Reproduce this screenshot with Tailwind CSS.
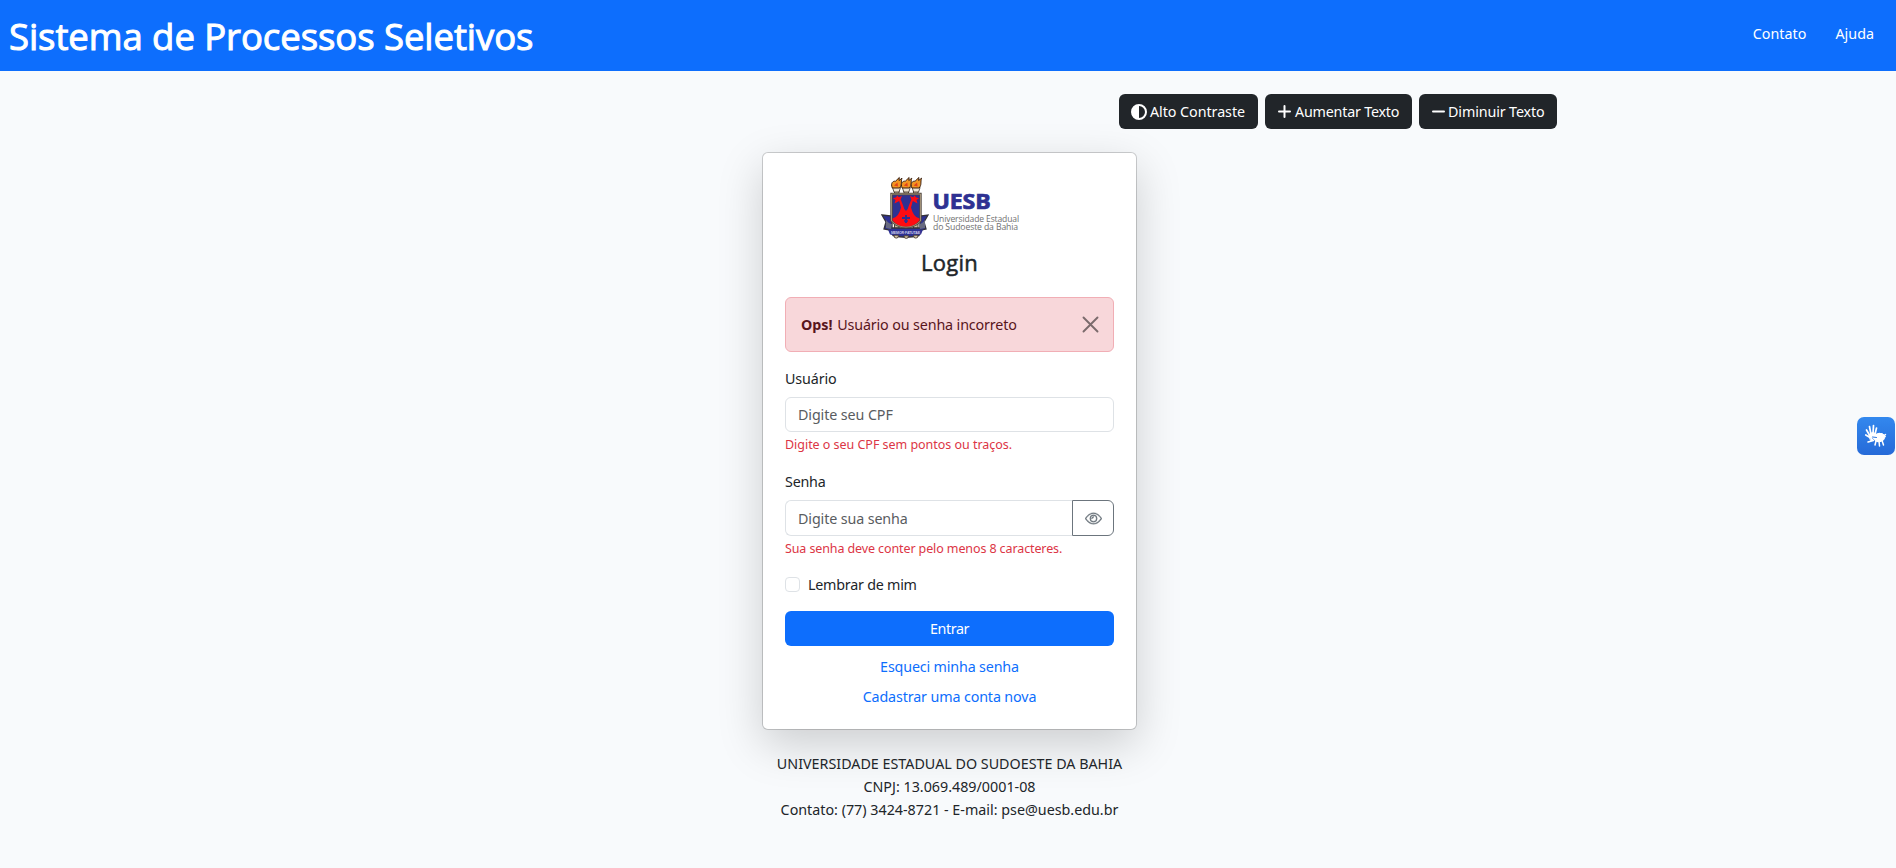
<!DOCTYPE html>
<html lang="pt-BR">
<head>
<meta charset="utf-8">
<title>Sistema de Processos Seletivos</title>
<script src="https://cdn.jsdelivr.net/npm/@tailwindcss/browser@4"></script>
</head>
<body class="h-[868px] overflow-hidden bg-[#f8fafc] font-['Noto_Sans',sans-serif] text-[14.3px] leading-[23px] tracking-[-0.13px] text-[#212529]">
<nav class="flex h-[71px] items-center justify-between bg-[#0d6efd] pl-[9px] pr-[22px] text-white">
  <h1 class="font-['Open_Sans',sans-serif] text-[36.5px] leading-[44px] tracking-[-0.07px] [-webkit-text-stroke:1px_white] whitespace-nowrap">Sistema de Processos Seletivos</h1>
  <div class="flex gap-[29px] pb-[4px] tracking-[0.02px]"><a>Contato</a><a>Ajuda</a></div>
</nav>

<div class="mt-[23px] ml-[1119px] flex h-[35px] gap-[7px] whitespace-nowrap text-white">
  <button class="flex w-[139px] items-center rounded-md bg-[#212529] pl-[12px] tracking-[-0.05px]">
    <svg class="mr-[3px] size-[16px]" viewBox="0 0 16 16"><circle cx="8" cy="8" r="7" fill="none" stroke="white" stroke-width="2"/><path d="M8 1a7 7 0 0 0 0 14z" fill="white"/></svg>Alto Contraste</button>
  <button class="flex w-[147px] items-center rounded-md bg-[#212529] pl-[13px] tracking-[-0.21px]">
    <svg class="mr-[4px] size-[13px]" viewBox="0 0 13 13" fill="none" stroke="white" stroke-width="2" stroke-linecap="round"><path d="M6.5 1v11M1 6.5h11"/></svg>Aumentar Texto</button>
  <button class="flex w-[138px] items-center rounded-md bg-[#212529] pl-[13px] tracking-[-0.12px]">
    <svg class="mr-[3px] size-[13px]" viewBox="0 0 13 13" fill="none" stroke="white" stroke-width="2" stroke-linecap="round"><path d="M1 6.5h11"/></svg>Diminuir Texto</button>
</div>

<main class="ml-[762px] mt-[23px] flex w-[375px] flex-col">
  <section class="flex h-[578px] flex-col rounded-md border border-black/[0.175] bg-white bg-clip-padding px-[22px] pt-[22px] shadow-[0_15px_45px_rgba(0,0,0,0.175)]">
    <svg class="mx-auto h-[64px] w-[140px] shrink-0" viewBox="0 0 140 64">
      <g stroke="#4b4036" stroke-width="1" fill="#c9b79b">
        <rect x="14.5" y="13" width="4.5" height="47" rx="2"/><rect x="24" y="13" width="4.5" height="49" rx="2"/><rect x="33.5" y="13" width="4.5" height="47" rx="2"/>
      </g>
      <g fill="#efe4d2" stroke="#3c3027" stroke-width=".8"><path d="M12.500 12.500h8l-1.500 4.500h-5zM22.300 12.500h8l-1.500 4.500h-5zM32.100 12.500h8l-1.500 4.500h-5z"/></g>
      <g fill="#f39422" stroke="#3a2112" stroke-width="1">
        <path d="M12.300 13C10.300 8 13 5.800 15.500 6.200L19.300 2.500l-.3 3 3-2.300c-1.500 4 .5 6-2.400 9.800z"/>
        <path d="M22.100 13C20.100 8 22.800 5.800 25.300 6.200L29.100 2.500l-.3 3 3-2.300c-1.500 4 .5 6-2.400 9.800z"/>
        <path d="M31.900 13C29.900 8 32.600 5.800 35.100 6.200L38.900 2.500l-.3 3 3-2.300c-1.500 4 .5 6-2.400 9.800z"/>
      </g>
      <path d="M14 10.500l3.500-3 .5 4zM23.800 10.500l3.500-3 .5 4zM33.600 10.500l3.500-3 .5 4z" fill="#e1431b"/>
      <path d="M2 40l10 1v12h28V41l8-1-4 7 2 7-5 1-2 5.500Q26 64 13 60.500L10 55l-6-1 2-7z" fill="#2e3192" stroke="#35333a" stroke-width="1.3"/>
      <path d="M6 45q3 4 6 4l-1 5-5-1zM45 45q-3 4-6 4l1 5 5-1z" fill="#686a80"/>
      <path d="M11.500 19h29v27q-6 6-14.500 6-8.500 0-14.500-6z" fill="#2e3192" stroke="#51473f" stroke-width="2.400"/>
      <path d="M11.500 19h29v27q-6 6-14.500 6-8.500 0-14.500-6z" fill="none" stroke="#a9987e" stroke-width=".9"/>
      <path d="M12.500 43.500q6-1 8.500-11l-1.800-6.500-4.700 2.500 1-3.500-2.500-1.800 3.200-.9 1-1.800 1.700 1.700 3.100-1.200-1.400 3.300 2.600 6.500q.8 4 2.800 5.200 2-1.200 2.800-5.200l2.600-6.500-1.400-3.300 3.100 1.200 1.700-1.700 1 1.800 3.200.9-2.500 1.800 1 3.500-4.700-2.500-1.800 6.500q2.500 10 8.500 11v2q-5 6-13.500 6t-13.500-6z" fill="#ff0c12"/>
      <path d="M26 40v8M22 43h8M24.300 46h3.400" stroke="#2e3192" stroke-width="1.900" fill="none"/>
      <path d="M8 54.500q17.500 3.500 35 0l-2 5q-16 3-31 0z" fill="#2e3192"/>
      <text x="11" y="59" font-family="Liberation Sans" font-size="3.800" font-weight="700" fill="#c9cae8" textLength="29" lengthAdjust="spacingAndGlyphs">MEMOR·FATUTAE</text>
      <g fill="#d5c5a9" stroke="#4b4036" stroke-width=".9"><path d="M14 60.200h4.500l-.5 2.300q-1.700 1.200-3.500 0zM24 60.800h4.500l-.5 2q-1.700 1.200-3.500 0zM33.500 60.200H38l-.5 2.300q-1.700 1.200-3.500 0z"/></g>
      <text x="52.500" y="34" font-family="Open Sans" font-size="20.500" font-weight="700" fill="#2e3192" stroke="#2e3192" stroke-width=".7" textLength="58" lengthAdjust="spacingAndGlyphs">UESB</text>
      <text x="53" y="46.800" font-family="Open Sans" font-size="8.300" fill="#707070" textLength="86" lengthAdjust="spacingAndGlyphs">Universidade Estadual</text>
      <text x="53" y="54.800" font-family="Open Sans" font-size="8.300" fill="#707070" textLength="85" lengthAdjust="spacingAndGlyphs">do Sudoeste da Bahia</text>
    </svg>
    <h2 class="mt-[8px] h-[30px] shrink-0 text-center font-['Open_Sans',sans-serif] text-[22px] leading-[30px] tracking-[0.3px] [-webkit-text-stroke:0.5px_#212529]">Login</h2>
    <div class="mt-[20px] flex h-[55px] shrink-0 items-center justify-between rounded-md border border-[#f1aeb5] bg-[#f8d7da] pl-[15px] pr-[14px] text-[#58151c]">
      <p class="whitespace-nowrap"><b class="mr-[1px] tracking-[0px]">Ops!</b> Usuário ou senha incorreto</p>
      <svg class="size-[17px] opacity-50" viewBox="0 0 17 17" fill="none" stroke="black" stroke-width="1.900" stroke-linecap="round"><path d="M1.500 1.500l14 14M15.500 1.500l-14 14"/></svg>
    </div>
    <label class="mt-[16px] h-[22px] shrink-0 leading-[22px]">Usuário</label>
    <input class="mt-[7px] h-[35px] shrink-0 rounded-md border border-[#dee2e6] bg-white px-[12px] tracking-[-0.1px] placeholder:text-[#595c5f]" placeholder="Digite seu CPF">
    <p class="mt-[4px] h-[18px] shrink-0 text-[12.500px] leading-[18px] tracking-[-0.032px] text-[#dc3545] whitespace-nowrap">Digite o seu CPF sem pontos ou traços.</p>
    <label class="mt-[17px] h-[22px] shrink-0 leading-[22px] tracking-[-0.22px]">Senha</label>
    <div class="mt-[7px] flex h-[36px] shrink-0">
      <input class="w-[287px] rounded-l-md border border-r-0 border-[#dee2e6] bg-white px-[12px] tracking-[-0.12px] placeholder:text-[#595c5f]" placeholder="Digite sua senha">
      <button class="flex w-[42px] items-center justify-center rounded-r-md border border-[#6c757d]">
        <svg class="size-[17px]" viewBox="0 0 16 16" fill="#6c757d" stroke="#6c757d" stroke-width=".3"><path d="M16 8s-3-5.500-8-5.500S0 8 0 8s3 5.500 8 5.500S16 8 16 8M1.173 8a13 13 0 0 1 1.660-2.043C4.120 4.668 5.880 3.500 8 3.500s3.879 1.168 5.168 2.457A13 13 0 0 1 14.828 8q-.086.130-.195.288c-.335.480-.830 1.120-1.465 1.755C11.879 11.332 10.119 12.500 8 12.500s-3.879-1.168-5.168-2.457A13 13 0 0 1 1.172 8z"/><path d="M8 5.500a2.500 2.500 0 1 0 0 5 2.500 2.500 0 0 0 0-5M4.500 8a3.500 3.500 0 1 1 7 0 3.500 3.500 0 0 1-7 0"/><path d="M8 5.500v1.300a1.200 1.200 0 0 1-1.200 1.200H5.500"/></svg>
      </button>
    </div>
    <p class="mt-[4px] h-[18px] shrink-0 text-[12.500px] leading-[18px] tracking-[-0.109px] text-[#dc3545] whitespace-nowrap">Sua senha deve conter pelo menos 8 caracteres.</p>
    <label class="mt-[15px] flex h-[23px] shrink-0 items-center gap-[8px] tracking-[-0.23px]"><span class="size-[15px] rounded-[4px] border border-[#dee2e6] bg-white"></span>Lembrar de mim</label>
    <button class="mt-[15px] h-[35px] shrink-0 rounded-md bg-[#0d6efd] tracking-[-0.4px] text-white">Entrar</button>
    <a class="mt-[9px] h-[23px] shrink-0 text-center tracking-[-0.16px] text-[#0d6efd]">Esqueci minha senha</a>
    <a class="mt-[7px] h-[23px] shrink-0 text-center text-[#0d6efd]">Cadastrar uma conta nova</a>
  </section>
  <footer class="mt-[22px] text-center tracking-[0px] whitespace-nowrap">
    <p>UNIVERSIDADE ESTADUAL DO SUDOESTE DA BAHIA</p>
    <p>CNPJ: 13.069.489/0001-08</p>
    <p>Contato: (77) 3424-8721 - E-mail: pse@uesb.edu.br</p>
  </footer>
</main>

<div class="fixed top-[417px] right-[1px] size-[38px] rounded-[7px] bg-linear-to-b from-[#3388ee] to-[#266ad8]">
  <svg class="size-[38px]" viewBox="0 0 38 38" fill="none" stroke="white" stroke-linecap="round" stroke-linejoin="round">
    <path d="M13 19L9.500 13M14 17.500L12.500 9.500M16 17L16.500 8.500M18 17.500L19.500 11M13 20.500L8.800 18" stroke-width="1.700"/>
    <path d="M12 18.500l3-3 4 1-1 3-4 1.500 2 2-2 .5z" fill="white" stroke-width="1"/>
    <path d="M17 19q3-3.500 8-2.500l3.500 2.500-2 4q-4 3-7 1.500l-4-3.500 3-2z" fill="white" stroke-width="1"/>
    <path d="M19 24l-1 4M22 24l.5 5M25 23.500l1.500 4.500M16.500 23.500L11 25M27 18.500l1.500-1M18.500 18.500l4-2" stroke-width="1.500"/>
    <path d="M15.500 20l4 .5" stroke="#2c78e2" stroke-width="1"/>
  </svg>
</div>
</body>
</html>
